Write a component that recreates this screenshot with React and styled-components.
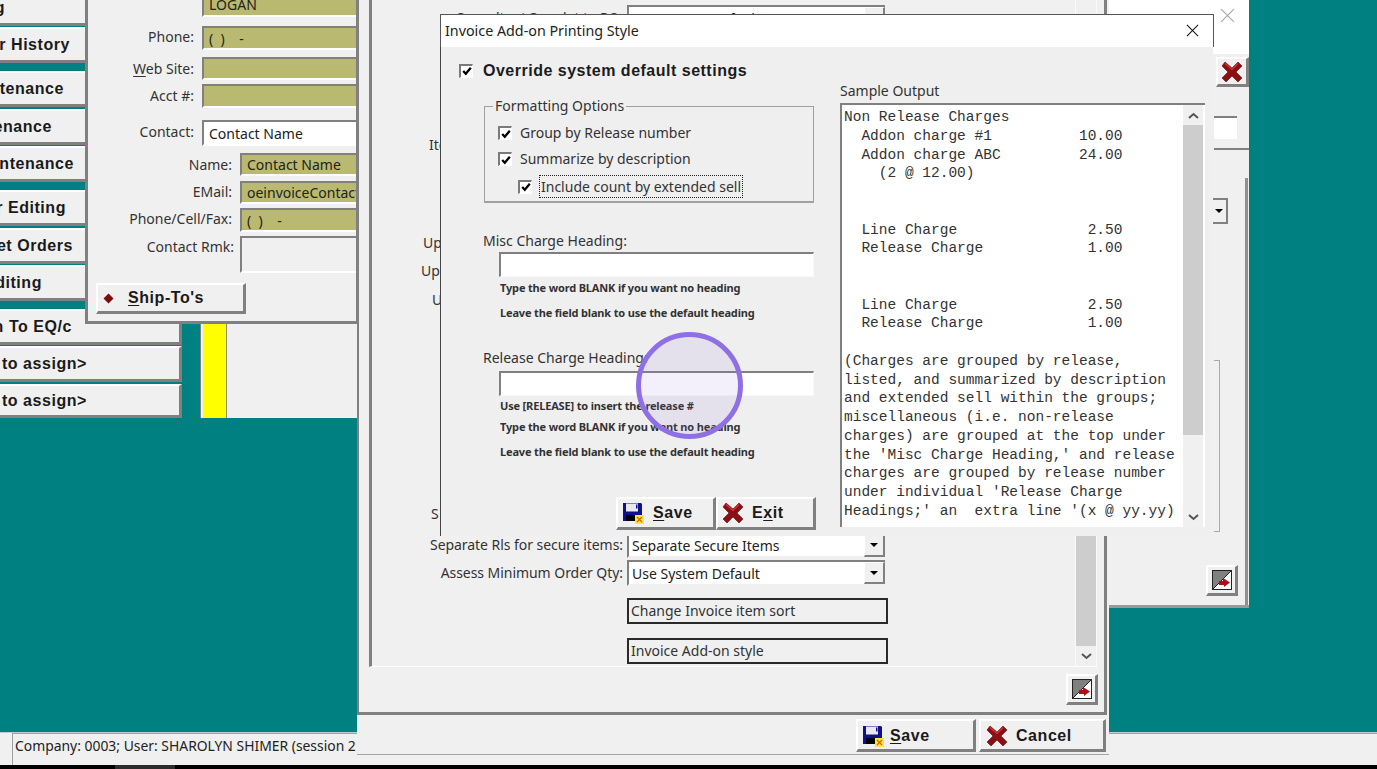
import styled, { createGlobalStyle } from 'styled-components';

const GlobalStyle = createGlobalStyle`
  html, body { margin: 0; padding: 0; background: #000; }
  body { font-family: "Noto Sans", "Liberation Sans", sans-serif; }
`;

const Desktop = styled.div`
  width: 1377px;
  height: 769px;
  display: flex;
  flex-direction: column;
  overflow: hidden;
  background: #000;
`;

const Workspace = styled.div`
  position: relative;
  height: 732px;
  flex: none;
  background: #008080;
  border-bottom: 1px solid #b9cfcf;
`;

const StatusBar = styled.div`
  height: 31px;
  flex: none;
  background: #f0f0f0;
  padding-left: 12px;
  border-bottom: 1px solid #f0f0f0;
`;

const StatusPane = styled.div`
  height: 31px;
  padding-left: 2px;
  border-left: 1px solid #a0a0a0;
  border-top: 1px solid #a0a0a0;
  font-size: 13.9px;
  line-height: 24px;
  color: #222;
  white-space: nowrap;
`;

const BlackBar = styled.div`
  height: 5px;
  flex: none;
  padding-left: 115px;
`;

const TaskChip = styled.div`
  width: 60px;
  height: 5px;
  background: #2c2c2c;
`;

const Sidebar = styled.div`
  position: absolute;
  left: 0;
  top: 0;
  width: 182px;
  display: flex;
  flex-direction: column;
`;

const BevelButton = styled.button`
  display: flex;
  align-items: center;
  box-sizing: border-box;
  padding: 0;
  background: #f0f0f0;
  border: solid;
  border-width: 2px 3px 3px 2px;
  border-color: #fff #808080 #808080 #fff;
  font-family: "Liberation Sans", sans-serif;
  font-weight: 700;
  font-size: 16px;
  letter-spacing: 0.55px;
  color: #1a1a1a;
  white-space: nowrap;
`;

const SideButton = styled(BevelButton)`
  height: ${(p) => p.$h || 36}px;
  width: 182px;
  margin-top: ${(p) => p.$mt || 0}px;
  border-left: 0;
  justify-content: flex-start;
`;

const SideLabel = styled.span`
  display: flex;
  justify-content: flex-end;
  width: ${(p) => p.$end}px;
`;

const CustomerWindow = styled.div`
  position: absolute;
  left: 85px;
  top: -8px;
  width: 273px;
  height: 332px;
  box-sizing: border-box;
  background: #f0f0f0;
  border: solid #808080;
  border-width: 0 2px 3px 3px;
  overflow: hidden;
`;

const FieldRow = styled.div`
  display: grid;
  grid-template-columns: ${(p) => p.$labelWidth}px 1fr;
  column-gap: 8px;
  height: ${(p) => p.$h}px;
  margin-top: ${(p) => p.$mt || 0}px;
`;

const FieldLabel = styled.div`
  display: flex;
  justify-content: flex-end;
  align-items: center;
  padding-bottom: ${(p) => (p.$pb === undefined ? 3 : p.$pb)}px;
  font-size: 14px;
  color: #333;
  white-space: nowrap;
  u { text-underline-offset: 2px; }
`;

const RemarkLabel = styled(FieldLabel)`
  align-items: flex-start;
  padding-top: 1px;
  margin-right: -2px;
`;

const Field = styled.div`
  box-sizing: border-box;
  display: flex;
  align-items: center;
  padding-left: 5px;
  background: ${(p) => (p.$white ? '#fff' : p.$empty ? '#f0f0f0' : '#bab971')};
  border: solid;
  border-width: 2px 0 2px 2px;
  border-color: #808080 #fff #fff #808080;
  font-size: 14px;
  color: #222;
  white-space: pre;
  overflow: hidden;
`;

const ShipToButton = styled(BevelButton)`
  width: 150px;
  height: 31px;
  margin: 10px 0 0 8px;
  gap: 14px;
  padding-left: 5px;
  u { text-underline-offset: 2px; }
`;

const BackStrip = styled.div`
  position: absolute;
  left: 200px;
  top: 300px;
  width: 158px;
  height: 118px;
  background: #f0f0f0;
  padding-left: 2px;
  box-sizing: border-box;
  border-left: 1px solid #808080;
`;

const YellowBar = styled.div`
  width: 23px;
  height: 100%;
  background: #ffff00;
  border-right: 1px solid #8d8d70;
`;

const RightWindow = styled.div`
  position: absolute;
  left: 1108px;
  top: 0;
  width: 141px;
  height: 608px;
  box-sizing: border-box;
  background: #f0f0f0;
  display: flex;
  flex-direction: column;
  align-items: flex-end;
  border-bottom: 3px solid #9a9a9a;
`;

const RightTitle = styled.div`
  width: 100%;
  height: 54px;
  flex: none;
  background: #fff;
  display: flex;
  justify-content: flex-end;
  align-items: flex-start;
  padding: 8px 14px 0 0;
  box-sizing: border-box;
`;

const RedButton = styled(BevelButton)`
  width: 33px;
  height: 30px;
  margin-top: 3px;
  justify-content: center;
`;

const SmallEdit = styled.div`
  width: 23px;
  height: 23px;
  margin: 29px 12px 0 0;
  box-sizing: border-box;
  background: #fff;
  border-top: 2px solid #808080;
`;

const RightRule = styled.div`
  width: 35px;
  height: 2px;
  margin-top: 9px;
  background: #808080;
`;

const RightPanel = styled.div`
  flex: 1;
  width: 100%;
  margin-top: 28px;
  box-sizing: border-box;
  border-right: 3px solid #909090;
  margin-right: 1px;
  display: flex;
  flex-direction: column;
  align-items: flex-end;
`;

const ComboStub = styled.div`
  width: 15px;
  height: 26px;
  margin: 20px 17px 0 0;
  box-sizing: border-box;
  display: flex;
  align-items: center;
  justify-content: flex-end;
  padding-right: 3px;
  border: solid #808080;
  border-width: 2px 2px 2px 0;
`;

const Bracket = styled.div`
  width: 6px;
  height: 172px;
  margin: 136px 25px 0 0;
  box-sizing: border-box;
  border: solid #aaa;
  border-width: 1px 1px 1px 0;
`;

const CornerButton = styled(BevelButton)`
  width: 32px;
  height: 31px;
  justify-content: center;
  margin: ${(p) => p.$margin};
`;

const MainWindow = styled.div`
  position: absolute;
  left: 357px;
  top: -20px;
  width: 752px;
  height: 775px;
  display: flex;
  flex-direction: column;
  background: #f0f0f0;
`;

const MainBody = styled.div`
  flex: none;
  height: 735px;
  box-sizing: border-box;
  width: 750px;
  border: solid #808080;
  border-width: 0 3px 3px 2px;
  display: flex;
  flex-direction: column;
  align-items: stretch;
`;

const InnerPanel = styled.div`
  height: 687px;
  flex: none;
  margin: 0 7px 0 10px;
  box-sizing: border-box;
  display: flex;
  border-left: 3px solid #808080;
  border-bottom: 1px solid #fff;
`;

const InnerRows = styled.div`
  flex: 1;
  display: flex;
  flex-direction: column;
`;

const Row = styled.div`
  display: flex;
  align-items: center;
  height: ${(p) => p.$h || 26}px;
  margin-top: ${(p) => p.$mt || 0}px;
`;

const RowLabel = styled.div`
  width: 251px;
  flex: none;
  padding-bottom: 2px;
  text-align: right;
  font-size: 14px;
  letter-spacing: -0.05px;
  color: #333;
  white-space: nowrap;
`;

const PeekLabel = styled.div`
  padding-left: ${(p) => p.$x}px;
  font-size: 14px;
  color: #333;
`;

const Combo = styled.div`
  width: 258px;
  height: 100%;
  margin-left: 4px;
  flex: none;
  box-sizing: border-box;
  background: #fff;
  border: solid;
  border-width: 2px 0 2px 2px;
  border-color: #808080 #f0f0f0 #f0f0f0 #808080;
  display: flex;
  align-items: center;
  justify-content: space-between;
  padding-left: 3px;
  font-size: 14px;
  color: #222;
`;

const ComboArrow = styled.div`
  width: 21px;
  height: 22px;
  box-sizing: border-box;
  background: #f0f0f0;
  border: solid;
  border-width: 1px 2px 2px 1px;
  border-color: #fff #808080 #808080 #fff;
  display: flex;
  align-items: center;
  justify-content: center;
`;

const Triangle = styled.span`
  width: 0;
  height: 0;
  border-left: 4px solid transparent;
  border-right: 4px solid transparent;
  border-top: 4px solid #000;
`;

const OutlineButton = styled.div`
  width: 261px;
  height: 26px;
  margin: ${(p) => p.$mt}px 0 0 255px;
  box-sizing: border-box;
  border: 2px solid #2a2a2a;
  padding-left: 2px;
  font-size: 14px;
  line-height: 21px;
  color: #333;
`;

const ScrollTrack = styled.div`
  width: 22px;
  flex: none;
  box-sizing: border-box;
  display: flex;
  flex-direction: column;
  align-items: stretch;
  border-right: 1px solid #fafafa;
  border-left: 1px solid #fafafa;
`;

const ScrollThumb = styled.div`
  flex: 1;
  background: #cdcdcd;
  margin-top: ${(p) => p.$mt || 0}px;
`;

const ScrollEnd = styled.div`
  height: 20px;
  flex: none;
  display: flex;
  align-items: center;
  justify-content: center;
  color: #555;
`;

const CornerRow = styled.div`
  display: flex;
  justify-content: flex-end;
  padding: 7px 6px 0 0;
`;

const ButtonBar = styled.div`
  flex: 1;
  display: flex;
  justify-content: flex-end;
  align-items: flex-start;
  gap: 3px;
  padding: 4px 3px 0 0;
  box-sizing: border-box;
  border-bottom: 1px solid #a5a5a5;
`;

const BarButton = styled(BevelButton)`
  width: ${(p) => p.$w}px;
  height: 33px;
  padding-left: ${(p) => p.$pl || 6}px;
  padding-top: 1px;
  gap: ${(p) => p.$gap || 13}px;
  u { text-underline-offset: 2px; }
`;

const Dialog = styled.div`
  position: absolute;
  left: 440px;
  top: 14px;
  width: 774px;
  height: 522px;
  display: flex;
  flex-direction: column;
`;

const DialogTitle = styled.div`
  height: 33px;
  flex: none;
  box-sizing: border-box;
  display: flex;
  justify-content: space-between;
  align-items: center;
  padding: 0 14px 2px 4px;
  background: #fff;
  border: solid #555;
  border-width: 1px 1px 0 1px;
  font-size: 14.3px;
  color: #222;
`;

const DialogBody = styled.div`
  flex: 1;
  display: flex;
  background: #efefef;
  border-left: 1px solid #444;
  margin-right: 1px;
`;

const DialogLeft = styled.div`
  width: 398px;
  flex: none;
  box-sizing: border-box;
  padding: 14px 0 0 18px;
  display: flex;
  flex-direction: column;
`;

const CheckRow = styled.div`
  display: flex;
  align-items: center;
  gap: ${(p) => p.$gap || 8}px;
  margin: ${(p) => p.$mt || 0}px 0 0 ${(p) => p.$ml || 0}px;
`;

const CheckBox = styled.span`
  width: 14px;
  height: 14px;
  box-sizing: border-box;
  flex: none;
  display: flex;
  align-items: center;
  justify-content: center;
  background: #fff;
  border: solid;
  border-width: 2px 1px 1px 2px;
  border-color: #7a7a7a #fff #fff #7a7a7a;
`;

const OverrideText = styled.span`
  padding-top: 1px;
  font-family: "Liberation Sans", sans-serif;
  font-weight: 700;
  font-size: 16px;
  letter-spacing: 0.5px;
  color: #1c1c1c;
`;

const OptionText = styled.span`
  font-size: 14px;
  line-height: 20px;
  color: #333;
  white-space: nowrap;
`;

const FocusText = styled(OptionText)`
  outline: 1px dotted #222;
  padding: 0 1px;
  line-height: 21px;
`;

const OptionsGroup = styled.fieldset`
  margin: 20px 0 0 25px;
  width: 330px;
  height: 103px;
  box-sizing: border-box;
  padding: 11px 0 0 13px;
  border: 1px solid #a0a0a0;
  border-bottom-width: 2px;
  display: flex;
  flex-direction: column;
`;

const GroupLegend = styled.legend`
  margin-left: -5px;
  padding: 0 2px;
  font-size: 14px;
  line-height: 12px;
  height: 12px;
  color: #333;
`;

const HeadingLabel = styled.div`
  margin: ${(p) => p.$mt}px 0 0 24px;
  font-size: 14px;
  line-height: 20px;
  color: #333;
`;

const HeadingInput = styled.div`
  margin: ${(p) => p.$mt || 0}px 0 0 40px;
  width: 315px;
  height: 25px;
  box-sizing: border-box;
  background: #fff;
  border: solid;
  border-width: 2px 1px 1px 2px;
  border-color: #808080 #f8f8f8 #f8f8f8 #808080;
`;

const Note = styled.div`
  margin: ${(p) => p.$mt}px 0 0 41px;
  font-size: 11px;
  line-height: 14px;
  font-weight: 700;
  letter-spacing: -0.16px;
  color: #333;
  white-space: nowrap;
`;

const DialogActions = styled.div`
  margin: 38px 0 0 157px;
  display: flex;
`;

const ActionButton = styled(BevelButton)`
  width: ${(p) => p.$w}px;
  height: 33px;
  padding-left: 4px;
  gap: ${(p) => p.$gap}px;
  u { text-underline-offset: 2px; }
`;

const SampleColumn = styled.div`
  padding-top: 34px;
  margin-left: 1px;
  display: flex;
  flex-direction: column;
`;

const SampleTitle = styled.div`
  font-size: 14px;
  line-height: 20px;
  height: 22px;
  color: #333;
`;

const SampleBox = styled.div`
  width: 365px;
  height: 424px;
  box-sizing: border-box;
  display: flex;
  background: #fff;
  border: solid;
  border-width: 2px 0 0 2px;
  border-color: #808080;
`;

const SampleText = styled.pre`
  flex: 1;
  margin: 0;
  padding: 3px 0 0 2px;
  font-family: "Liberation Mono", "Courier New", monospace;
  font-size: 14.5px;
  line-height: 18.75px;
  color: #333;
  overflow: hidden;
`;

const SampleScroll = styled.div`
  width: 20px;
  flex: none;
  margin-right: 2px;
  display: flex;
  flex-direction: column;
  background: #f0f0f0;
`;

const ThumbSpace = styled.div`
  height: ${(p) => p.$h}px;
  flex: none;
  background: ${(p) => p.$bg || 'transparent'};
`;

const Ring = styled.div`
  position: absolute;
  left: 636px;
  top: 332px;
  width: 107px;
  height: 107px;
  box-sizing: border-box;
  border-radius: 50%;
  border: 5px solid #8e6fe6;
  background: rgba(140, 105, 230, 0.1);
`;

const Chevron = ({ up }) => (
  <svg width="11" height="7" viewBox="0 0 11 7">
    <path d={up ? 'M1 6 L5.5 2 L10 6' : 'M1 1 L5.5 5 L10 1'} fill="none" stroke="#555" strokeWidth="2" />
  </svg>
);

const CloseCross = ({ color, size }) => (
  <svg width={size} height={size} viewBox="0 0 14 14">
    <path d="M1 1 L13 13 M13 1 L1 13" stroke={color} strokeWidth="1.1" fill="none" />
  </svg>
);

const Tick = () => (
  <svg width="10" height="10" viewBox="0 0 10 10">
    <path d="M1.2 5 L3.8 7.8 L8.8 1.8" fill="none" stroke="#000" strokeWidth="2.3" />
  </svg>
);

const RedX = () => (
  <svg width="22" height="22" viewBox="0 0 22 22">
    <path d="M4 1 L11 7 L17 1 L21 5 L15 11 L21 17 L17 21 L11 15 L5 21 L1 17 L7 11 L1 5 Z" fill="#8d0f14" stroke="#5c0a0c" strokeWidth="0.6" />
    <path d="M4 2.5 L11 8.5 L17 2.5" fill="none" stroke="#d6353a" strokeWidth="1.2" />
  </svg>
);

const Floppy = () => (
  <svg width="22" height="22" viewBox="0 0 22 22">
    <path d="M1 1 H19 L20 2 V19 H1 Z" fill="#10108e" />
    <rect x="4" y="1.5" width="12" height="8" fill="#e8e8f2" />
    <rect x="14" y="2.5" width="1.5" height="4" fill="#10108e" />
    <rect x="4" y="13" width="11" height="6" fill="#000" />
    <rect x="13" y="13" width="9" height="9" fill="#ffe14a" />
    <path d="M15 15 L20 20 M20 15 L15 20" stroke="#c96a00" strokeWidth="1.2" />
  </svg>
);

const Diamond = () => (
  <svg width="11" height="11" viewBox="0 0 11 11">
    <path d="M5.5 0.5 L10.5 5.5 L5.5 10.5 L0.5 5.5 Z" fill="#7d0b10" />
  </svg>
);

const CornerIcon = () => (
  <svg width="20" height="20" viewBox="0 0 20 20">
    <rect x="0.5" y="0.5" width="19" height="19" fill="#fff" stroke="#222" />
    <path d="M1 1 H19 L1 19 Z" fill="#808080" />
    <path d="M19 1 L1 19" stroke="#222" strokeWidth="1" />
    <path d="M7 11 H11 V8 L18 12.5 L12 17 V15 H7 Z" fill="#b00d16" />
  </svg>
);

const sideButtons = [
  { text: 'g', end: 5, mt: -10 },
  { text: 'r History', end: 70, mt: 1 },
  { text: 'tenance', end: 64, mt: 8 },
  { text: 'enance', end: 52, mt: 2 },
  { text: 'ntenance', end: 74, mt: 1 },
  { text: 'r Editing', end: 66, mt: 8 },
  { text: 'et Orders', end: 73, mt: 2 },
  { text: 'diting', end: 42, mt: 1 },
  { text: 'n To EQ/c', end: 72, mt: 8 },
  { text: 'to assign>', end: 87, mt: 1 },
  { text: 'to assign>', end: 87, mt: 2, h: 34 },
];

const sampleOutput = `Non Release Charges
  Addon charge #1          10.00
  Addon charge ABC         24.00
    (2 @ 12.00)


  Line Charge               2.50
  Release Charge            1.00


  Line Charge               2.50
  Release Charge            1.00

(Charges are grouped by release,
listed, and summarized by description
and extended sell within the groups;
miscellaneous (i.e. non-release
charges) are grouped at the top under
the 'Misc Charge Heading,' and release
charges are grouped by release number
under individual 'Release Charge
Headings;' an  extra line '(x @ yy.yy)`;

const App = () => (
  <Desktop>
    <GlobalStyle />
    <Workspace>
      <Sidebar>
        {sideButtons.map((b, i) => (
          <SideButton key={i} $mt={b.mt} $h={b.h}>
            <SideLabel $end={b.end}>{b.text}</SideLabel>
          </SideButton>
        ))}
      </Sidebar>

      <BackStrip>
        <YellowBar />
      </BackStrip>

      <CustomerWindow>
        <FieldRow $labelWidth={106} $h={25}>
          <FieldLabel />
          <Field>LOGAN</Field>
        </FieldRow>
        <FieldRow $labelWidth={106} $h={24} $mt={9}>
          <FieldLabel>Phone:</FieldLabel>
          <Field>(  )    -</Field>
        </FieldRow>
        <FieldRow $labelWidth={106} $h={23} $mt={7}>
          <FieldLabel $pb={1}><span><u>W</u>eb Site:</span></FieldLabel>
          <Field />
        </FieldRow>
        <FieldRow $labelWidth={106} $h={24} $mt={4}>
          <FieldLabel $pb={1}>Acct #:</FieldLabel>
          <Field />
        </FieldRow>
        <FieldRow $labelWidth={106} $h={26} $mt={12}>
          <FieldLabel>Contact:</FieldLabel>
          <Field $white>Contact Name</Field>
        </FieldRow>
        <FieldRow $labelWidth={144} $h={23} $mt={7}>
          <FieldLabel $pb={1}>Name:</FieldLabel>
          <Field>Contact Name</Field>
        </FieldRow>
        <FieldRow $labelWidth={144} $h={23} $mt={5}>
          <FieldLabel>EMail:</FieldLabel>
          <Field>oeinvoiceContact@example</Field>
        </FieldRow>
        <FieldRow $labelWidth={144} $h={24} $mt={4}>
          <FieldLabel>Phone/Cell/Fax:</FieldLabel>
          <Field>(  )    -</Field>
        </FieldRow>
        <FieldRow $labelWidth={144} $h={37} $mt={4}>
          <RemarkLabel>Contact Rmk:</RemarkLabel>
          <Field $empty />
        </FieldRow>
        <ShipToButton>
          <Diamond />
          <span><u>S</u>hip-To's</span>
        </ShipToButton>
      </CustomerWindow>

      <RightWindow>
        <RightTitle>
          <CloseCross color="#a8a8a8" size={15} />
        </RightTitle>
        <RedButton>
          <RedX />
        </RedButton>
        <SmallEdit />
        <RightRule />
        <RightPanel>
          <ComboStub>
            <Triangle />
          </ComboStub>
          <Bracket />
          <CornerButton $margin="33px 7px 0 0">
            <CornerIcon />
          </CornerButton>
        </RightPanel>
      </RightWindow>

      <MainWindow>
        <MainBody>
          <InnerPanel>
            <InnerRows>
              <Row $mt={25}>
                <RowLabel>Consultant Supplet to PO:</RowLabel>
                <Combo>
                  Use System Default
                  <ComboArrow><Triangle /></ComboArrow>
                </Combo>
              </Row>
              <Row $mt={100}><PeekLabel $x={57}>Ite</PeekLabel></Row>
              <Row $mt={72}><PeekLabel $x={51}>Up</PeekLabel></Row>
              <Row $mt={2}><PeekLabel $x={49}>Up</PeekLabel></Row>
              <Row $mt={3}><PeekLabel $x={60}>U</PeekLabel></Row>
              <Row $mt={188}><PeekLabel $x={59}>S</PeekLabel></Row>
              <Row $mt={7} $h={25}>
                <RowLabel>Separate Rls for secure items:</RowLabel>
                <Combo>
                  Separate Secure Items
                  <ComboArrow><Triangle /></ComboArrow>
                </Combo>
              </Row>
              <Row $mt={2}>
                <RowLabel>Assess Minimum Order Qty:</RowLabel>
                <Combo>
                  Use System Default
                  <ComboArrow><Triangle /></ComboArrow>
                </Combo>
              </Row>
              <OutlineButton $mt={12}>Change Invoice item sort</OutlineButton>
              <OutlineButton $mt={14}>Invoice Add-on style</OutlineButton>
            </InnerRows>
            <ScrollTrack>
              <ScrollThumb $mt={40} />
              <ScrollEnd><Chevron /></ScrollEnd>
            </ScrollTrack>
          </InnerPanel>
          <CornerRow>
            <CornerButton $margin="0">
              <CornerIcon />
            </CornerButton>
          </CornerRow>
        </MainBody>
        <ButtonBar>
          <BarButton $w={120} $pl={4} $gap={6}>
            <Floppy />
            <span><u>S</u>ave</span>
          </BarButton>
          <BarButton $w={127} $pl={5} $gap={8}>
            <RedX />
            Cancel
          </BarButton>
        </ButtonBar>
      </MainWindow>

      <Dialog>
        <DialogTitle>
          Invoice Add-on Printing Style
          <CloseCross color="#111" size={13} />
        </DialogTitle>
        <DialogBody>
          <DialogLeft>
            <CheckRow $gap={10}>
              <CheckBox><Tick /></CheckBox>
              <OverrideText>Override system default settings</OverrideText>
            </CheckRow>
            <OptionsGroup>
              <GroupLegend>Formatting Options</GroupLegend>
              <CheckRow>
                <CheckBox><Tick /></CheckBox>
                <OptionText>Group by Release number</OptionText>
              </CheckRow>
              <CheckRow $mt={6}>
                <CheckBox><Tick /></CheckBox>
                <OptionText>Summarize by description</OptionText>
              </CheckRow>
              <CheckRow $mt={7} $ml={20}>
                <CheckBox><Tick /></CheckBox>
                <FocusText>Include count by extended sell</FocusText>
              </CheckRow>
            </OptionsGroup>
            <HeadingLabel $mt={28}>Misc Charge Heading:</HeadingLabel>
            <HeadingInput $mt={1} />
            <Note $mt={4}>Type the word BLANK if you want no heading</Note>
            <Note $mt={11}>Leave the field blank to use the default heading</Note>
            <HeadingLabel $mt={28}>Release Charge Heading:</HeadingLabel>
            <HeadingInput $mt={3} />
            <Note $mt={3}>Use [RELEASE] to insert the release #</Note>
            <Note $mt={7}>Type the word BLANK if you want no heading</Note>
            <Note $mt={11}>Leave the field blank to use the default heading</Note>
            <DialogActions>
              <ActionButton $w={100} $gap={9}>
                <Floppy />
                <span><u>S</u>ave</span>
              </ActionButton>
              <ActionButton $w={100} $gap={8}>
                <RedX />
                <span>E<u>x</u>it</span>
              </ActionButton>
            </DialogActions>
          </DialogLeft>
          <SampleColumn>
            <SampleTitle>Sample Output</SampleTitle>
            <SampleBox>
              <SampleText>{sampleOutput}</SampleText>
              <SampleScroll>
                <ScrollEnd><Chevron up /></ScrollEnd>
                <ThumbSpace $h={310} $bg="#cdcdcd" />
                <ThumbSpace $h={72} />
                <ScrollEnd><Chevron /></ScrollEnd>
              </SampleScroll>
            </SampleBox>
          </SampleColumn>
        </DialogBody>
      </Dialog>

      <Ring />
    </Workspace>
    <StatusBar>
      <StatusPane>Company: 0003; User: SHAROLYN SHIMER (session 2</StatusPane>
    </StatusBar>
    <BlackBar>
      <TaskChip />
    </BlackBar>
  </Desktop>
);

export default App;
